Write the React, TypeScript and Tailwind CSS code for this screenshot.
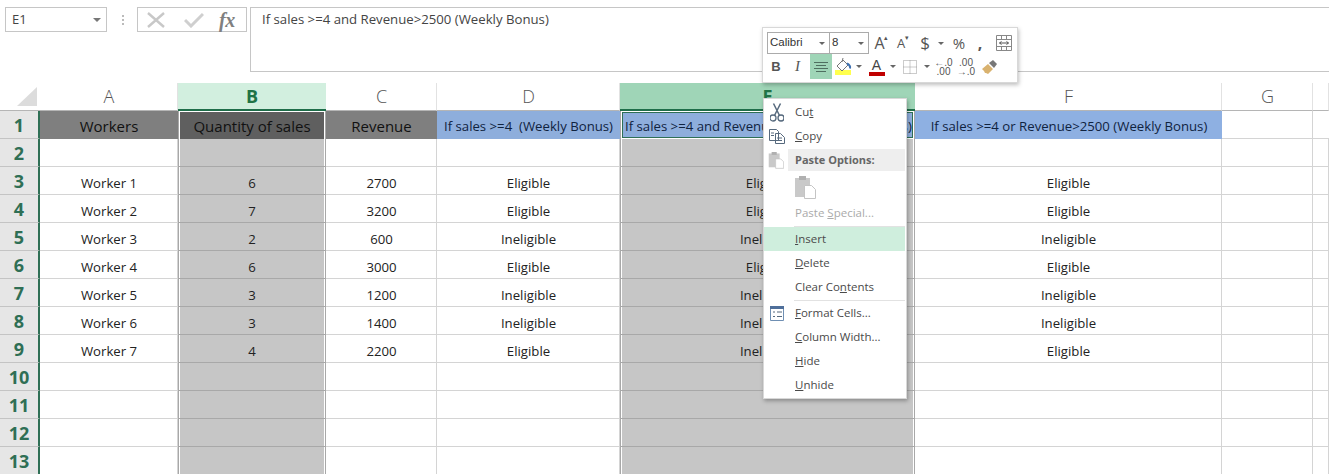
import type { ReactNode } from 'react'

const font = "font-['Open_Sans',sans-serif]"

const headers = [
  { label: 'A' },
  { label: 'B', selected: true },
  { label: 'C' },
  { label: 'D' },
  { label: 'E', selected: true },
  { label: 'F' },
  { label: 'G' },
  { label: '' },
]

const titles = ['Workers', 'Quantity of sales', 'Revenue', 'If sales >=4  (Weekly Bonus)', 'If sales >=4 and Revenue>2500 (Weekly Bonus)', 'If sales >=4 or Revenue>2500 (Weekly Bonus)']

const workers = [
  ['Worker 1', '6', '2700', 'Eligible', 'Eligible', 'Eligible'],
  ['Worker 2', '7', '3200', 'Eligible', 'Eligible', 'Eligible'],
  ['Worker 3', '2', '600', 'Ineligible', 'Ineligible', 'Ineligible'],
  ['Worker 4', '6', '3000', 'Eligible', 'Eligible', 'Eligible'],
  ['Worker 5', '3', '1200', 'Ineligible', 'Ineligible', 'Ineligible'],
  ['Worker 6', '3', '1400', 'Ineligible', 'Ineligible', 'Ineligible'],
  ['Worker 7', '4', '2200', 'Eligible', 'Ineligible', 'Eligible'],
]

function RowHeader({ n }: { n: number }) {
  return (
    <div className="flex h-[28px] items-center justify-center border-b border-r-2 border-b-[#c4c4c4] border-r-[#2f6f55] bg-[#e6e6e6] pt-[1px] text-[18px] font-bold text-[#2f6f55]">
      {n}
    </div>
  )
}

function Cell({ text, col }: { text?: string; col: number }) {
  const selected = col === 1 || col === 4
  if (selected) {
    return (
      <div className="flex h-[28px] items-center justify-center border-x border-b border-x-[#a8a8a8] border-b-[#a8a8a8] bg-[#c6c6c6] pt-[6px] text-[13.200px] text-[#222] shadow-[inset_1px_0_0_#fff,inset_-1px_0_0_#fff]">
        {text}
      </div>
    )
  }
  return (
    <div className="flex h-[28px] items-center justify-center border-b border-r border-[#d4d4d4] bg-white pl-[1px] pt-[6px] text-[13.200px] text-[#222]">
      {text}
    </div>
  )
}

function TitleRow() {
  return (
    <>
      <RowHeader n={1} />
      <div className="flex h-[28px] items-center justify-center bg-[#7f7f7f] pt-[3px] text-[15px] text-[#111]">{titles[0]}</div>
      <div className="flex h-[28px] items-center justify-center border-x border-[#a8a8a8] bg-[#5f5f5f] pt-[3px] text-[15px] text-[#111] shadow-[inset_1px_1px_0_#fff,inset_-1px_0_0_#fff]">{titles[1]}</div>
      <div className="flex h-[28px] items-center justify-center bg-[#7f7f7f] pt-[3px] text-[15px] text-[#111]">{titles[2]}</div>
      <div className="flex h-[28px] items-center justify-center whitespace-pre bg-[#8eaedc] pt-[3px] text-[13.200px] text-[#10233f]">{titles[3]}</div>
      <div className="h-[28px] border-x border-[#a8a8a8] bg-white p-[1px]">
        <div className="flex h-full items-center whitespace-nowrap border border-[#2f6f55] bg-[#8eaedc] pl-[2px] pt-[3px] text-[13.200px] text-[#10233f]">{titles[4]}</div>
      </div>
      <div className="flex h-[28px] items-center justify-center bg-[#8eb0e2] pl-[1px] pt-[3px] text-[13.200px] text-[#10233f]">{titles[5]}</div>
      <div className="h-[28px] border-b border-r border-[#d4d4d4] bg-white" />
      <div className="h-[28px] border-b border-[#d4d4d4] bg-white" />
    </>
  )
}

function Grid() {
  return (
    <div className="grid grid-cols-[40px_138px_148px_111px_183px_295px_307px_91px_16px]">
      <div className="flex h-[28px] items-end justify-end border-b border-[#b5b5b5] bg-white pb-[4px] pr-[3px]">
        <div className="h-0 w-0 border-b-[19px] border-l-[20px] border-b-[#dcdcdc] border-l-transparent" />
      </div>
      {headers.map((h, i) =>
        h.selected ? (
          <div
            key={i}
            className={
              h.label === 'B'
                ? 'flex h-[28px] items-center justify-center border-b-2 border-[#1f6e4a] bg-[#d2efdf] text-[18px] font-bold text-[#217346]'
                : 'flex h-[28px] items-center justify-center border-b-2 border-[#1f6e4a] bg-[#9fd5b7] text-[18px] font-bold text-[#217346]'
            }
          >
            {h.label}
          </div>
        ) : (
          <div
            key={i}
            className="flex h-[28px] items-center justify-center border-b border-r border-b-[#b5b5b5] border-r-[#e2e2e2] bg-white pl-[1px] text-[18px] font-light text-[#555]"
          >
            {h.label}
          </div>
        ),
      )}
      <TitleRow />
      <RowHeader n={2} />
      {[0, 1, 2, 3, 4, 5, 6, 7].map((c) => (
        <Cell key={c} col={c} />
      ))}
      {workers.map((row, r) => (
        <>
          <RowHeader key={`h${r}`} n={r + 3} />
          {[0, 1, 2, 3, 4, 5, 6, 7].map((c) => (
            <Cell key={`${r}-${c}`} col={c} text={row[c]} />
          ))}
        </>
      ))}
      {[10, 11, 12, 13].map((n) => (
        <>
          <RowHeader key={`h${n}`} n={n} />
          {[0, 1, 2, 3, 4, 5, 6, 7].map((c) => (
            <Cell key={`${n}-${c}`} col={c} />
          ))}
        </>
      ))}
    </div>
  )
}

function FormulaBar() {
  return (
    <div className="flex h-[83px] items-start bg-white pt-[7px]">
      <div className="ml-[5px] flex h-[25px] w-[102px] items-center justify-between border border-[#c6c6c6] pl-[6px] pr-[5px] text-[13px] text-[#444]">
        E1
        <div className="h-0 w-0 border-x-[4px] border-t-[4px] border-x-transparent border-t-[#777]" />
      </div>
      <div className="ml-[15px] mt-[8px] flex h-[10px] w-[2px] flex-col justify-between">
        <div className="h-[2px] bg-[#bbb]" />
        <div className="h-[2px] bg-[#bbb]" />
        <div className="h-[2px] bg-[#bbb]" />
      </div>
      <div className="ml-[13px] flex h-[25px] w-[110px] items-center border border-[#c6c6c6]">
        <svg width="18" height="16" viewBox="0 0 18 16" className="ml-[9px]">
          <path d="M1 1 17 15M17 1 1 15" stroke="#c8c8c8" strokeWidth="2.400" fill="none" />
        </svg>
        <svg width="20" height="16" viewBox="0 0 20 16" className="ml-[19px]">
          <path d="M1 8 7 14 19 2" stroke="#cfcfcf" strokeWidth="3" fill="none" />
        </svg>
        <span className="ml-[15px] font-['Liberation_Serif',serif] text-[20px] font-bold italic leading-none tracking-tight text-[#808080]">fx</span>
      </div>
      <div className="ml-[3px] flex h-[65px] flex-1 border-b border-l border-t border-[#c6c6c6] pl-[11px] pt-[2px] text-[13.200px] text-[#444]">
        If sales &gt;=4 and Revenue&gt;2500 (Weekly Bonus)
      </div>
    </div>
  )
}

function Caret({ className = '' }: { className?: string }) {
  return <div className={`h-0 w-0 border-x-[3px] border-t-[3px] border-x-transparent border-t-[#666] ${className}`} />
}

function Tool({ w, children, className = '' }: { w: string; children?: ReactNode; className?: string }) {
  return <div className={`flex h-[25px] items-center justify-center ${w} ${className}`}>{children}</div>
}

function MiniToolbar() {
  return (
    <div className="absolute left-[762px] top-[27px] h-[56px] w-[256px] border border-[#d8d8d8] bg-white pl-[4px] pt-[4px] text-[#555] shadow-[1px_2px_4px_rgba(0,0,0,0.25)]">
      <div className="flex h-[22px] items-center">
        <div className="flex h-[22px] w-[63px] items-center justify-between border border-[#ababab] pl-[2px] pr-[4px] font-['Liberation_Sans',sans-serif] text-[11.500px] text-[#333]">
          Calibri
          <Caret />
        </div>
        <div className="flex h-[22px] w-[39px] items-center justify-between border border-l-0 border-[#ababab] pl-[2px] pr-[4px] font-['Liberation_Sans',sans-serif] text-[11.500px] text-[#333]">
          8
          <Caret />
        </div>
        <div className="ml-[1px] flex w-[22px] items-start justify-center text-[16px] leading-[20px]">A<span className="-ml-[1px] text-[7px] leading-[10px]">▴</span></div>
        <div className="flex w-[22px] items-start justify-center text-[13px] leading-[22px]">A<span className="text-[7px] leading-[12px]">▾</span></div>
        <div className="w-[22px] text-center text-[17px] leading-[22px]">$</div>
        <div className="flex w-[10px] justify-center"><Caret /></div>
        <div className="ml-[2px] w-[22px] text-center text-[15px] leading-[22px]">%</div>
        <div className="w-[20px] text-center text-[16px] font-bold leading-[16px]">,</div>
        <svg width="16" height="16" viewBox="0 0 16 16" className="ml-[6px]">
          <path d="M.5.500h15v15H.500zM.500 4.500h15M.500 11.500h15M5.500.500v4M10.500.500v4M5.500 11.500v4M10.500 11.500v4" stroke="#888" fill="none" />
          <path d="M3.500 8h9M3.500 8l2-1.500M3.500 8l2 1.500M12.500 8l-2-1.500M12.500 8l-2 1.500" stroke="#555" fill="none" />
        </svg>
      </div>
      <div className="flex items-center">
        <Tool w="w-[18px]" className="font-['Liberation_Sans',sans-serif] text-[13px] font-bold">B</Tool>
        <Tool w="w-[25px]" className="font-['Liberation_Serif',serif] text-[15px] italic">I</Tool>
        <Tool w="w-[22px]" className="bg-[#9fd5b7]">
          <svg width="16" height="12" viewBox="0 0 16 12">
            <path d="M1 1.500h14M3 4.500h10M1 7.500h14M3 10.500h10" stroke="#4f6f60" fill="none" />
          </svg>
        </Tool>
        <Tool w="w-[22px]">
          <svg width="17" height="20" viewBox="0 0 17 20">
            <rect x="0" y="13" width="16" height="5" fill="#ffff4d" />
            <path d="M2 9 8 3l5 5-6 6z" stroke="#777" fill="#fff" />
            <path d="M8 1 7 5" stroke="#777" fill="none" />
            <path d="M12 6.500c2 1 3.500 3 3 5" stroke="#3c6fb0" strokeWidth="2" fill="none" />
          </svg>
        </Tool>
        <Tool w="w-[10px]"><Caret /></Tool>
        <Tool w="w-[25px]" className="flex-col">
          <span className="font-['Liberation_Sans',sans-serif] text-[14px] leading-[14px] text-[#444]">A</span>
          <div className="h-[4px] w-[16px] bg-[#c00000]" />
        </Tool>
        <Tool w="w-[8px]"><Caret /></Tool>
        <Tool w="w-[25px]">
          <svg width="14" height="14" viewBox="0 0 14 14">
            <path d="M.500.500h13v13H.500zM7 .500v13M.500 7h13" stroke="#999" strokeDasharray="1 1" fill="none" />
          </svg>
        </Tool>
        <Tool w="w-[10px]"><Caret /></Tool>
        <Tool w="w-[23px]" className="flex-col font-['Liberation_Sans',sans-serif] text-[10px] leading-[9px]">
          <span>←.0</span>
          <span>.00</span>
        </Tool>
        <Tool w="w-[22px]" className="flex-col font-['Liberation_Sans',sans-serif] text-[10px] leading-[9px]">
          <span>.00</span>
          <span>→.0</span>
        </Tool>
        <Tool w="w-[26px]">
          <svg width="16" height="16" viewBox="0 0 16 16">
            <path d="M0 10 6 5l5 5-5 5-2-1-1 0-1-2-1-1z" fill="#d9b26f" />
            <path d="M7 4l4-3 4 4-3 4z" fill="#777" />
          </svg>
        </Tool>
      </div>
    </div>
  )
}

function MenuItem({ before = '', mark, after = '', icon, active, muted }: { before?: string; mark: string; after?: string; icon?: ReactNode; active?: boolean; muted?: boolean }) {
  return (
    <div className={`flex h-[24px] items-center ${active ? 'bg-[#cfeedd]' : ''}`}>
      <div className="flex w-[25px] justify-center">{icon}</div>
      <span className={`ml-[6px] text-[11.500px] ${muted ? 'text-[#aaa]' : 'text-[#4a4a4a]'}`}>
        {before}
        <span className="underline">{mark}</span>
        {after}
      </span>
    </div>
  )
}

function ClipIcon({ big }: { big?: boolean }) {
  return (
    <svg width={big ? 22 : 16} height={big ? 24 : 18} viewBox="0 0 22 24">
      <rect x="1" y="3" width="15" height="19" fill="#c9c9c9" />
      <rect x="5" y="1" width="7" height="4" fill="#b0b0b0" />
      <path d="M10.500 10.500h7l4 4v9h-11z" fill="#fff" stroke="#c4c4c4" />
    </svg>
  )
}

function ContextMenu() {
  return (
    <div className="absolute left-[763px] top-[98px] h-[301px] w-[144px] border border-[#d8d8d8] bg-white pr-[1px] pt-[1px] shadow-[1px_2px_4px_rgba(0,0,0,0.3)]">
      <MenuItem before="Cu" mark="t" icon={
        <svg width="14" height="19" viewBox="0 0 14 19">
          <circle cx="3" cy="15" r="3" stroke="#56697d" strokeWidth="1.300" fill="none" />
          <circle cx="11" cy="15" r="3" stroke="#56697d" strokeWidth="1.300" fill="none" />
          <path d="M4.500 12.500 10.500.500M9.500 12.500 3.500.500" stroke="#56697d" strokeWidth="1.500" fill="none" />
        </svg>
      } />
      <MenuItem mark="C" after="opy" icon={
        <svg width="16" height="15" viewBox="0 0 16 15">
          <path d="M.500.500h7l2 2v9h-9zM6.500 4.500h5l4 4v6h-9z" stroke="#56697d" fill="#fff" />
          <path d="M2 4h3M2 6.500h3M8 9h5M8 11.500h5" stroke="#56697d" fill="none" />
        </svg>
      } />
      <div className="flex h-[24px] items-center">
        <div className="flex w-[24px] justify-center"><ClipIcon /></div>
        <div className="flex h-[22px] flex-1 items-center bg-[#eeeeee] pl-[7px] text-[11px] font-bold text-[#666]">Paste Options:</div>
      </div>
      <div className="flex h-[29px] items-center pl-[30px]"><ClipIcon big /></div>
      <MenuItem before="Paste " mark="S" after="pecial..." muted />
      <div className="ml-[30px] h-[2px] border-b border-[#e2e2e2]" />
      <MenuItem mark="I" after="nsert" active />
      <MenuItem mark="D" after="elete" />
      <MenuItem before="Clear Co" mark="n" after="tents" />
      <div className="ml-[30px] h-[2px] border-b border-[#e2e2e2]" />
      <MenuItem mark="F" after="ormat Cells..." icon={
        <svg width="14" height="15" viewBox="0 0 14 15">
          <path d="M.500.500h13v14H.500z" stroke="#6f8fb3" fill="#fff" />
          <rect x="0" y="0" width="14" height="3" fill="#4f6f9a" />
          <path d="M3 6h2M3 10.500h2M7 6h5M7 10.500h5" stroke="#56697d" fill="none" />
        </svg>
      } />
      <MenuItem mark="C" after="olumn Width..." />
      <MenuItem mark="H" after="ide" />
      <MenuItem mark="U" after="nhide" />
    </div>
  )
}

export default function App() {
  return (
    <div className={`relative h-[474px] w-[1329px] overflow-hidden bg-white ${font}`}>
      <FormulaBar />
      <Grid />
      <MiniToolbar />
      <ContextMenu />
    </div>
  )
}
